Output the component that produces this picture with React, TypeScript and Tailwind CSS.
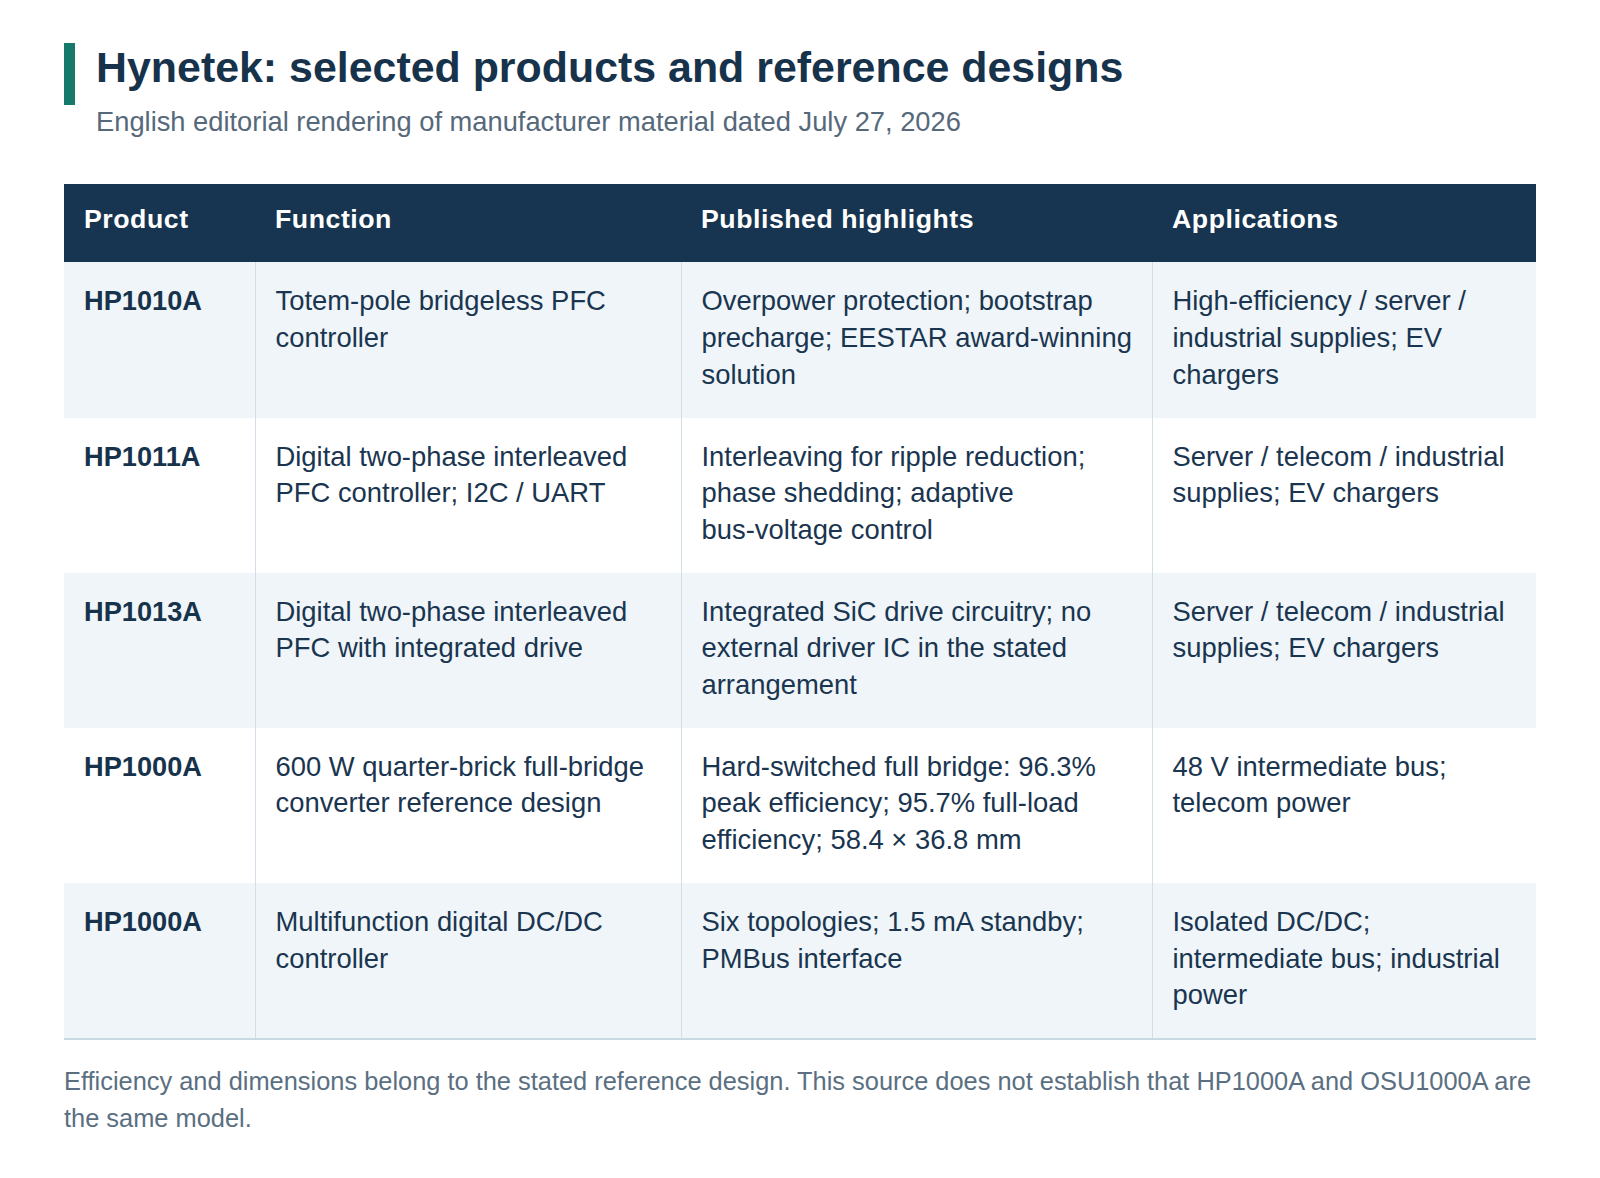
type Row = {
  product: string;
  fn: string;
  highlights: string;
  apps: string;
};

const rows: Row[] = [
  {
    product: "HP1010A",
    fn: "Totem-pole bridgeless PFC controller",
    highlights: "Overpower protection; bootstrap precharge; EESTAR award-winning solution",
    apps: "High-efficiency / server / industrial supplies; EV chargers",
  },
  {
    product: "HP1011A",
    fn: "Digital two-phase interleaved PFC controller; I2C / UART",
    highlights: "Interleaving for ripple reduction; phase shedding; adaptive bus-voltage control",
    apps: "Server / telecom / industrial supplies; EV chargers",
  },
  {
    product: "HP1013A",
    fn: "Digital two-phase interleaved PFC with integrated drive",
    highlights: "Integrated SiC drive circuitry; no external driver IC in the stated arrangement",
    apps: "Server / telecom / industrial supplies; EV chargers",
  },
  {
    product: "HP1000A",
    fn: "600 W quarter-brick full-bridge converter reference design",
    highlights: "Hard-switched full bridge: 96.3% peak efficiency; 95.7% full-load efficiency; 58.4 × 36.8 mm",
    apps: "48 V intermediate bus; telecom power",
  },
  {
    product: "HP1000A",
    fn: "Multifunction digital DC/DC controller",
    highlights: "Six topologies; 1.5 mA standby; PMBus interface",
    apps: "Isolated DC/DC; intermediate bus; industrial power",
  },
];

const cell =
  "border-l border-[#d3dfe8] pl-5 pr-3 pt-[21px] pb-[24px] align-top text-[27.4px] leading-[36.7px] text-[#1a3550]";

// keep hyphenated words together, the way the source wraps them
function Words({ text }: { text: string }) {
  const parts = text.split(" ");
  return (
    <>
      {parts.map((w, i) => (
        <span key={i}>
          {w.includes("-") ? <span className="whitespace-nowrap">{w}</span> : w}
          {i < parts.length - 1 ? " " : ""}
        </span>
      ))}
    </>
  );
}

export default function App() {
  return (
    <div className="min-h-screen bg-white px-16 pt-[41px] pb-10 font-['Liberation_Sans',Arial,sans-serif] text-[#17324b]">
      {/* Heading */}
      <header className="flex items-start gap-[21px]">
        <div className="mt-[2px] h-[62px] w-[11px] shrink-0 bg-[#16796b]" />
        <div>
          <h1 className="text-[42.9px] font-bold leading-[52px] text-[#17324b]">
            Hynetek: selected products and reference designs
          </h1>
          <p className="mt-[11px] text-[27.3px] leading-[36.7px] text-[#56697b]">
            English editorial rendering of manufacturer material dated July 27, 2026
          </p>
        </div>
      </header>

      {/* Table */}
      <table className="mt-[43px] w-full table-fixed border-collapse border-b-2 border-[#c8d9e4]">
        <colgroup>
          <col className="w-[191px]" />
          <col className="w-[426px]" />
          <col className="w-[471px]" />
          <col className="w-[384px]" />
        </colgroup>
        <thead>
          <tr className="bg-[#173450] text-white">
            {["Product", "Function", "Published highlights", "Applications"].map((h) => (
              <th
                key={h}
                className="px-5 pt-[17px] pb-[25px] text-left text-[26.7px] font-bold leading-[36.7px] tracking-[0.02em]"
              >
                {h}
              </th>
            ))}
          </tr>
        </thead>
        <tbody>
          {rows.map((r, i) => (
            <tr key={i} className={i % 2 === 0 ? "bg-[#eff5f8]" : "bg-white"}>
              <td className="px-5 pt-[21px] pb-[24px] align-top text-[27.2px] font-bold leading-[36.7px] text-[#17324b]">
                {r.product}
              </td>
              <td className={cell}>
                <Words text={r.fn} />
              </td>
              <td className={cell}>
                <Words text={r.highlights} />
              </td>
              <td className={cell}>
                <Words text={r.apps} />
              </td>
            </tr>
          ))}
        </tbody>
      </table>

      {/* Footnote */}
      <p className="mt-[23px] text-[25.4px] leading-[36.7px] text-[#5a6f81]">
        Efficiency and dimensions belong to the stated reference design. This source does not
        establish that HP1000A and OSU1000A are the same model.
      </p>
    </div>
  );
}
